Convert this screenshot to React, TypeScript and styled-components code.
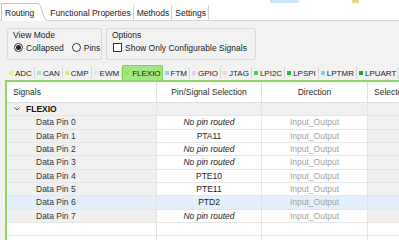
import * as React from 'react'
import styled, { createGlobalStyle } from 'styled-components'

const GlobalStyle = createGlobalStyle`
  html, body {
    margin: 0;
    padding: 0;
  }
  body {
    width: 399px;
    height: 240px;
    overflow: hidden;
    background: #f2f2f2;
    font-family: "Liberation Sans", Arial, sans-serif;
    font-size: 8.5px;
    color: #1e1e1e;
  }
`

const peripherals = [
  { name: 'ADC', color: '#eeee7a' },
  { name: 'CAN', color: '#a6f09a' },
  { name: 'CMP', color: '#e6e66a' },
  { name: 'EWM', color: '#c9f3f0' },
  { name: 'FLEXIO', color: '#8ee06a', active: true },
  { name: 'FTM', color: '#8fd3f3' },
  { name: 'GPIO', color: '#f2cdf2' },
  { name: 'JTAG', color: '#f7d9c2' },
  { name: 'LPI2C', color: '#3fd33f' },
  { name: 'LPSPI', color: '#1cc51c' },
  { name: 'LPTMR', color: '#86c9f5' },
  { name: 'LPUART', color: '#12b012' },
]

const pins = [
  { signal: 'Data Pin 0', pin: 'No pin routed' },
  { signal: 'Data Pin 1', pin: 'PTA11' },
  { signal: 'Data Pin 2', pin: 'No pin routed' },
  { signal: 'Data Pin 3', pin: 'No pin routed' },
  { signal: 'Data Pin 4', pin: 'PTE10' },
  { signal: 'Data Pin 5', pin: 'PTE11' },
  { signal: 'Data Pin 6', pin: 'PTD2', selected: true },
  { signal: 'Data Pin 7', pin: 'No pin routed' },
]

const App: React.FC = () => {
  return (
    <>
      <GlobalStyle />
      <TopStrip>
        <StripItem $active>Basic</StripItem>
        <StripItem>Advanced</StripItem>
        <StripIcon />
      </TopStrip>

      <TabBar>
        <RoutingTab>
          <RoutingLabel>Routing</RoutingLabel>
          <svg width="9" height="18" viewBox="0 0 9 18">
            <path d="M0 0.5 C4 0.5 4.5 17 9 17 L9 18 L0 18 Z" fill="#fff" />
            <path d="M0 0.5 C4 0.5 4.5 17 9 17" fill="none" stroke="#c4c4c4" />
          </svg>
        </RoutingTab>
        <Tab>Functional Properties</Tab>
        <Tab>Methods</Tab>
        <Tab>Settings</Tab>
      </TabBar>

      <Content>
        <GroupRow>
          <GroupBox $width={95}>
            <GroupLabel>View Mode</GroupLabel>
            <Controls>
              <Choice>
                <Radio $checked />
                Collapsed
              </Choice>
              <Choice>
                <Radio />
                Pins
              </Choice>
            </Controls>
          </GroupBox>
          <GroupBox $width={150}>
            <GroupLabel>Options</GroupLabel>
            <Controls>
              <Choice>
                <CheckBox />
                Show Only Configurable Signals
              </Choice>
            </Controls>
          </GroupBox>
        </GroupRow>

        <PeriphBar>
          {peripherals.map((p) => (
            <PeriphTab key={p.name} $active={p.active}>
              <Swatch $color={p.color} />
              {p.name}
            </PeriphTab>
          ))}
        </PeriphBar>

        <Frame>
          <HeaderRow>
            <HeadCell $left>Signals</HeadCell>
            <HeadCell>Pin/Signal Selection</HeadCell>
            <HeadCell>Direction</HeadCell>
            <HeadCell $left>Selected</HeadCell>
          </HeaderRow>

          <Row>
            <GroupCell>
              <svg width="6" height="4" viewBox="0 0 6 4">
                <polyline points="0.5,0.5 3,3 5.5,0.5" fill="none" stroke="#555" strokeWidth="1" />
              </svg>
              FLEXIO
            </GroupCell>
            <Cell $tone="gray" />
            <Cell $tone="gray" />
            <Cell $tone="gray" />
          </Row>

          {pins.map((p) => (
            <Row key={p.signal}>
              <SignalCell $selected={p.selected}>{p.signal}</SignalCell>
              <Cell $tone={p.selected ? 'blue' : 'white'} $italic={p.pin === 'No pin routed'}>
                {p.pin}
              </Cell>
              <Cell $tone={p.selected ? 'blue' : 'white'} $muted>
                Input_Output
              </Cell>
              <Cell $tone={p.selected ? 'blue' : 'gray'} />
            </Row>
          ))}

          <Row>
            <Cell $tone="white" />
            <Cell $tone="white" />
            <Cell $tone="white" />
            <Cell $tone="white" />
          </Row>
          <Row>
            <Cell $tone="white" />
            <Cell $tone="white" />
            <Cell $tone="white" />
            <Cell $tone="white" />
          </Row>
        </Frame>
      </Content>
    </>
  )
}

const TopStrip = styled.div`
  display: flex;
  align-items: flex-end;
  height: 3px;
  padding-left: 270px;
  overflow: hidden;
  background: #fff;
`

const StripItem = styled.div<{ $active?: boolean }>`
  flex: none;
  height: 11px;
  line-height: 11px;
  padding: 0 4px;
  margin-right: 2px;
  color: #a8a8a8;
  background: ${(p) => (p.$active ? '#cce4f7' : 'transparent')};
`

const StripIcon = styled.div`
  flex: none;
  width: 7px;
  height: 6px;
  margin-left: 3px;
  background: #e6d68e;
`

const TabBar = styled.div`
  display: flex;
  align-items: flex-end;
  height: 17px;
  padding-left: 1px;
  background: #fff;
  border-bottom: 1px solid #d6d6d6;
`

const RoutingTab = styled.div`
  display: flex;
  align-items: flex-start;
  height: 18px;
  margin-bottom: -1px;
`

const RoutingLabel = styled.div`
  display: flex;
  align-items: center;
  height: 17px;
  padding: 0 4px 0 3px;
  background: #fff;
  border-left: 1px solid #c4c4c4;
  border-top: 1px solid #c4c4c4;
  color: #1a1a1a;
`

const Tab = styled.div`
  display: flex;
  align-items: center;
  height: 15px;
  padding: 0 2px 0 3px;
  border-right: 1px solid #d4d4d4;
  color: #1a1a1a;
  white-space: nowrap;
`

const Content = styled.div`
  padding-top: 7px;
`

const GroupRow = styled.div`
  display: flex;
  gap: 4px;
  padding-left: 7px;
`

const GroupBox = styled.div<{ $width: number }>`
  box-sizing: border-box;
  width: ${(p) => p.$width}px;
  height: 32px;
  padding: 1px 5px 0;
  border: 1px solid #d9d9d9;
  border-radius: 3px;
`

const GroupLabel = styled.div`
  height: 10px;
  line-height: 10px;
  color: #222;
`

const Controls = styled.div`
  display: flex;
  align-items: center;
  gap: 8px;
  height: 15px;
  padding-left: 1px;
`

const Choice = styled.label`
  display: flex;
  align-items: center;
  gap: 3px;
  color: #1a1a1a;
  white-space: nowrap;
`

const Radio = styled.span<{ $checked?: boolean }>`
  box-sizing: border-box;
  display: flex;
  align-items: center;
  justify-content: center;
  width: 9px;
  height: 9px;
  border: 1px solid #333;
  border-radius: 50%;
  background: #fff;

  &::after {
    content: '';
    display: ${(p) => (p.$checked ? 'block' : 'none')};
    width: 5px;
    height: 5px;
    border-radius: 50%;
    background: #222;
  }
`

const CheckBox = styled.span`
  box-sizing: border-box;
  width: 9px;
  height: 9px;
  border: 1px solid #333;
  background: #fff;
`

const PeriphBar = styled.div`
  display: flex;
  align-items: flex-end;
  height: 16px;
  margin-top: 4px;
  padding-left: 7px;
  white-space: nowrap;
  font-size: 8px;
`

const PeriphTab = styled.div<{ $active?: boolean }>`
  box-sizing: border-box;
  flex: none;
  display: flex;
  align-items: center;
  gap: ${(p) => (p.$active ? '3px' : '2px')};
  height: ${(p) => (p.$active ? '15px' : '12px')};
  margin-bottom: ${(p) => (p.$active ? '0' : '1px')};
  padding: ${(p) => (p.$active ? '0 1px 0 2px' : '0 2px')};
  color: #1a1a1a;
  background: ${(p) => (p.$active ? '#a3e87e' : 'transparent')};
  border: ${(p) => (p.$active ? '1px solid #82d157' : 'none')};
  border-bottom: none;
  border-right: ${(p) => (p.$active ? '1px solid #82d157' : '1px solid #d8d8d8')};
  border-radius: ${(p) => (p.$active ? '2px 2px 0 0' : '0')};
`

const Swatch = styled.span<{ $color: string }>`
  width: 4px;
  height: 4px;
  background: ${(p) => p.$color};
`

const Frame = styled.div`
  margin-left: 5px;
  border-left: 2px solid #8fd866;
  border-top: 2px solid #8fd866;
  background: #fff;
  overflow: hidden;
`

const columns = '150px 105px 106px 140px'

const HeaderRow = styled.div`
  display: grid;
  grid-template-columns: ${columns};
  height: 20px;
  border-bottom: 1px solid #dedede;
  background: #fff;
`

const HeadCell = styled.div<{ $left?: boolean }>`
  display: flex;
  align-items: center;
  justify-content: ${(p) => (p.$left ? 'flex-start' : 'center')};
  padding-left: ${(p) => (p.$left ? '6px' : '0')};
  border-right: 1px solid #e2e2e2;
  color: #2a2a2a;
  white-space: nowrap;
`

const Row = styled.div`
  display: grid;
  grid-template-columns: ${columns};
  height: 13.33px;
`

const toneColors = {
  white: '#ffffff',
  gray: '#f0f0f0',
  blue: '#e3f0fb',
}

const Cell = styled.div<{ $tone: 'white' | 'gray' | 'blue'; $italic?: boolean; $muted?: boolean }>`
  display: flex;
  align-items: center;
  justify-content: center;
  border-right: 1px solid #e4e4e4;
  border-bottom: 1px solid #e6e6e6;
  background: ${(p) => toneColors[p.$tone]};
  color: ${(p) => (p.$muted ? '#a3a3a3' : '#1e1e1e')};
  font-style: ${(p) => (p.$italic ? 'italic' : 'normal')};
  white-space: nowrap;
`

const SignalCell = styled.div<{ $selected?: boolean }>`
  display: flex;
  align-items: center;
  padding-left: 29px;
  border-right: 1px solid #e4e4e4;
  border-bottom: 1px solid #e6e6e6;
  background: ${(p) => (p.$selected ? toneColors.blue : toneColors.gray)};
  color: #333;
`

const GroupCell = styled.div`
  display: flex;
  align-items: center;
  gap: 6px;
  padding-left: 7px;
  border-right: 1px solid #e4e4e4;
  border-bottom: 1px solid #e6e6e6;
  background: #f0f0f0;
  font-weight: bold;
  color: #111;
`

export default App
